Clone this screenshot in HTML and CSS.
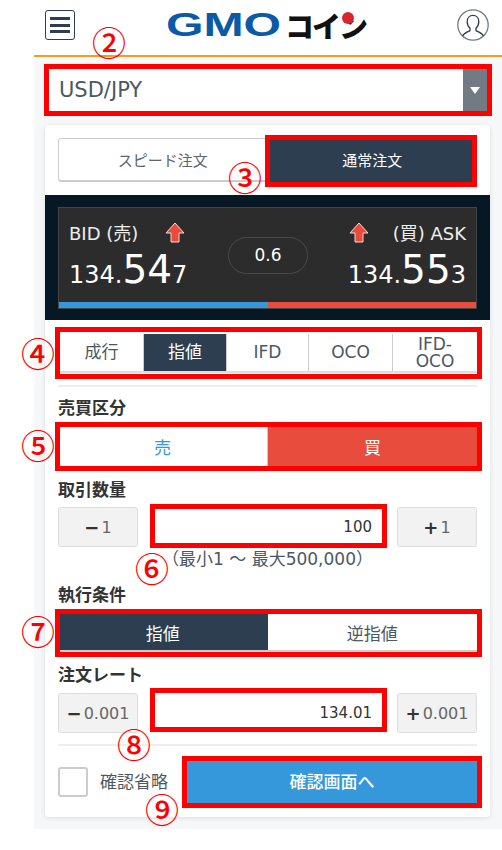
FILE: index.html
```html
<!DOCTYPE html>
<html lang="ja">
<head>
    <meta charset="UTF-8">
    <meta name="viewport" content="width=device-width, initial-scale=1.0">
    <title>GMOコイン 注文画面</title>
    <link rel="stylesheet" href="styles.css">
</head>
<body>
    <div class="app">
        <header class="app-header">
            <div class="menu-button"><span></span><span></span><span></span></div>
            <div class="logo">
                <span class="logo-gmo">GMO</span>
                <span class="logo-coin">コイン</span>
                <span class="logo-dot"></span>
            </div>
            <svg class="user-icon" viewBox="0 0 32 32" width="32" height="32">
                <circle cx="16" cy="16" r="15.2" fill="#fff" stroke="#6f7c86" stroke-width="1.3"/>
                <path d="M5.5 27 C7 23.5 10.5 23 13 21.6 V19.2 C11 17.5 10.2 15 10.2 12.6 C10.2 8.8 12.6 6.4 16 6.4 C19.4 6.4 21.8 8.8 21.8 12.6 C21.8 15 21 17.5 19 19.2 V21.6 C21.5 23 25 23.5 26.5 27" fill="none" stroke="#2c3e50" stroke-width="1.3"/>
            </svg>
        </header>

        <main class="content">
            <div class="symbol-select">
                <span class="symbol-name">USD/JPY</span>
                <span class="select-caret"></span>
            </div>

            <section class="order-card">
                <div class="mode-tabs">
                    <div class="mode-tab">スピード注文</div>
                    <div class="mode-tab active">通常注文</div>
                </div>

                <div class="rate-board">
                    <div class="rate-panel">
                        <div class="rate-main">
                            <div class="rate-side">
                                <div class="rate-head">
                                    <span class="rate-label">BID (売)</span>
                                    <svg class="up-arrow" viewBox="0 0 20 21" width="20" height="21"><path d="M10 1 L19 11 H14 V20 H6 V11 H1 Z" fill="#e74c3c" stroke="#f5d9d5" stroke-width="1"/></svg>
                                </div>
                                <div class="rate-price">134.<span class="big">54</span>7</div>
                            </div>
                            <div class="spread">0.6</div>
                            <div class="rate-side right">
                                <div class="rate-head">
                                    <svg class="up-arrow" viewBox="0 0 20 21" width="20" height="21"><path d="M10 1 L19 11 H14 V20 H6 V11 H1 Z" fill="#e74c3c" stroke="#f5d9d5" stroke-width="1"/></svg>
                                    <span class="rate-label">(買) ASK</span>
                                </div>
                                <div class="rate-price">134.<span class="big">55</span>3</div>
                            </div>
                        </div>
                        <div class="rate-bar"><span class="bar-bid"></span><span class="bar-ask"></span></div>
                    </div>
                </div>

                <div class="type-tabs">
                    <div class="type-tab">成行</div>
                    <div class="type-tab active">指値</div>
                    <div class="type-tab">IFD</div>
                    <div class="type-tab">OCO</div>
                    <div class="type-tab">IFD-<br>OCO</div>
                </div>

                <div class="divider top-divider"></div>

                <div class="field-label first">売買区分</div>
                <div class="toggle side-toggle">
                    <div class="toggle-item sell">売</div>
                    <div class="toggle-item buy">買</div>
                </div>

                <div class="field-label amount-label">取引数量</div>
                <div class="stepper amount-stepper">
                    <div class="step-button"><b>−</b>1</div>
                    <div class="step-input">100</div>
                    <div class="step-button"><b>+</b>1</div>
                </div>
                <div class="hint">（最小1 ～ 最大500,000）</div>

                <div class="field-label exec-label">執行条件</div>
                <div class="toggle exec-toggle">
                    <div class="toggle-item dark">指値</div>
                    <div class="toggle-item">逆指値</div>
                </div>

                <div class="field-label rate-input-label">注文レート</div>
                <div class="stepper rate-stepper">
                    <div class="step-button"><b>−</b>0.001</div>
                    <div class="step-input">134.01</div>
                    <div class="step-button"><b>+</b>0.001</div>
                </div>

                <div class="divider bottom-divider"></div>

                <div class="confirm-row">
                    <span class="check-box"></span>
                    <span class="check-label">確認省略</span>
                    <div class="confirm-button">確認画面へ</div>
                </div>
            </section>
        </main>
    </div>

    <!-- 説明用の赤枠と番号 -->
    <div class="mark box-2"></div>
    <div class="mark box-3"></div>
    <div class="mark box-4"></div>
    <div class="mark box-5"></div>
    <div class="mark box-6"></div>
    <div class="mark box-7"></div>
    <div class="mark box-8"></div>
    <div class="mark box-9"></div>
    <span class="num num-2">②</span>
    <span class="num num-3">③</span>
    <span class="num num-4">④</span>
    <span class="num num-5">⑤</span>
    <span class="num num-6">⑥</span>
    <span class="num num-7">⑦</span>
    <span class="num num-8">⑧</span>
    <span class="num num-9">⑨</span>
</body>
</html>
```

FILE: styles.css
```css
* {
    box-sizing: border-box;
}
html, body {
    height: 850px;
    overflow: hidden;
}
body {
    position: relative;
    margin: 0;
    background-color: #fff;
    color: #333;
    font-family: "DejaVu Sans", "Noto Sans CJK JP", sans-serif;
}
.app {
    margin-left: 34px;
    width: 468px;
}
.app-header {
    height: 57px;
    padding: 10px 13px 0 11px;
    border-bottom: 2px solid #f39c1f;
    background-color: #fff;
    display: flex;
    justify-content: space-between;
    align-items: flex-start;
    position: relative;
}
.menu-button {
    width: 30px;
    height: 30px;
    border: 1.5px solid #2c3e50;
    border-radius: 3px;
    padding: 6px 4px;
    display: flex;
    flex-direction: column;
    justify-content: space-between;
}
.menu-button span {
    display: block;
    height: 3px;
    background-color: #2c3e50;
}
.logo {
    position: relative;
    width: 200px;
    height: 28px;
    margin-top: 1px;
    display: flex;
    align-items: center;
    white-space: nowrap;
}
.logo-gmo {
    width: 117px;
    color: #0a5aa8;
    font-family: "Liberation Sans", sans-serif;
    font-weight: 700;
    font-size: 33px;
    line-height: 28px;
    transform: scaleX(1.46);
    transform-origin: left center;
}
.logo-coin {
    margin-left: 3px;
    color: #111;
    font-family: "Noto Sans CJK JP", sans-serif;
    font-weight: 900;
    font-size: 29px;
    line-height: 28px;
    letter-spacing: -2px;
}
.logo-dot {
    position: absolute;
    left: 176px;
    top: 1px;
    width: 12px;
    height: 12px;
    border-radius: 50%;
    background-color: #d9262c;
}
.user-icon {
    margin-top: -1px;
}
.content {
    height: 772px;
    padding: 12px 12px 0 11px;
    background-color: #f6f7f9;
}
.symbol-select {
    margin: 0 -7px 0 4px;
    width: 438px;
    height: 42px;
    background-color: #fff;
    display: flex;
    justify-content: space-between;
    align-items: stretch;
}
.symbol-name {
    padding-left: 10px;
    font-size: 21px;
    line-height: 42px;
    color: #4b5863;
}
.select-caret {
    position: relative;
    width: 24px;
    background-color: #727b84;
}
.select-caret::after {
    content: "";
    position: absolute;
    left: 7px;
    top: 18px;
    border-left: 5px solid transparent;
    border-right: 5px solid transparent;
    border-top: 7px solid #fff;
}
.order-card {
    margin-top: 14px;
    width: 445px;
    height: 692px;
    padding-top: 13px;
    background-color: #fff;
    border-radius: 4px;
    box-shadow: 0 1px 5px rgba(0, 0, 0, 0.1);
}
.mode-tabs {
    display: flex;
    height: 44px;
    margin: 0 13px;
}
.mode-tab {
    flex: 1;
    display: flex;
    align-items: center;
    justify-content: center;
    border: 1px solid #ccc;
    border-bottom-width: 2px;
    border-radius: 3px 0 0 3px;
    color: #5a6670;
    font-size: 15px;
}
.mode-tab.active {
    background-color: #2c3e50;
    border-color: #2c3e50;
    border-radius: 0 3px 3px 0;
    color: #fff;
}
.rate-board {
    margin-top: 13px;
    height: 125px;
    padding: 12px 13px 11px;
    background-color: #051824;
}
.rate-panel {
    height: 102px;
    background-color: #2c2c2c;
    border: 1px solid #454545;
    display: flex;
    flex-direction: column;
    color: #fff;
}
.rate-main {
    flex: 1;
    padding: 14px 10px 0 10px;
    display: flex;
    justify-content: space-between;
    position: relative;
}
.rate-side.right {
    text-align: right;
}
.rate-head {
    display: flex;
    align-items: center;
    gap: 27px;
    height: 20px;
}
.rate-side.right .rate-head {
    gap: 24px;
    justify-content: flex-end;
}
.rate-label {
    font-size: 18px;
    color: #eee;
    white-space: nowrap;
}
.rate-price {
    margin-top: 8px;
    font-size: 24px;
    line-height: 40px;
    white-space: nowrap;
}
.rate-price .big {
    font-size: 39px;
}
.spread {
    position: absolute;
    left: 169px;
    top: 29px;
    width: 80px;
    height: 37px;
    border: 1px solid #4a4a4a;
    border-radius: 19px;
    text-align: center;
    font-size: 17px;
    line-height: 35px;
}
.rate-bar {
    display: flex;
    height: 6px;
}
.rate-bar span {
    flex: 1;
}
.bar-bid {
    background-color: #3498db;
}
.bar-ask {
    background-color: #e74c3c;
}
.type-tabs {
    display: grid;
    grid-template-columns: 83px 83px 82px 84px 85px;
    margin: 14px 13px 0 15px;
    height: 39px;
    border-bottom: 2px solid #ddd;
}
.type-tab {
    display: flex;
    align-items: center;
    justify-content: center;
    text-align: center;
    border-left: 1px solid #ccc;
    color: #4b5863;
    font-size: 17px;
    line-height: 17px;
}
.type-tab:first-child {
    border-left: none;
}
.type-tab.active {
    background-color: #2c3e50;
    color: #fff;
}
.divider {
    height: 2px;
    margin: 0 13px;
    background-color: #eee;
}
.top-divider {
    margin-top: 12px;
}
.field-label {
    margin-left: 13px;
    font-size: 17px;
    font-weight: 700;
    line-height: 20px;
    color: #333;
}
.field-label.first {
    margin-top: 11px;
}
.toggle {
    display: flex;
    margin: 0 13px;
}
.toggle-item {
    flex: 1;
    display: flex;
    align-items: center;
    justify-content: center;
    font-size: 17px;
    color: #4b5863;
}
.side-toggle {
    margin-top: 9px;
    height: 39px;
}
.toggle-item.sell {
    color: #3498db;
    border-right: 1px solid #ccc;
}
.toggle-item.buy {
    background-color: #e74c3c;
    color: #fff;
}
.toggle-item.dark {
    background-color: #2c3e50;
    color: #fff;
}
.amount-label {
    margin-top: 14px;
}
.stepper {
    display: flex;
    justify-content: space-between;
    margin: 0 13px;
    height: 40px;
}
.amount-stepper {
    margin-top: 7px;
}
.rate-stepper {
    margin-top: 8px;
}
.step-button {
    width: 80px;
    background-color: #f2f2f2;
    border: 1px solid #ddd;
    border-radius: 3px;
    display: flex;
    align-items: center;
    justify-content: center;
    font-size: 16px;
    color: #666;
}
.step-button b {
    margin-right: 2px;
    font-size: 18px;
    color: #333;
}
.step-input {
    width: 227px;
    padding-right: 9px;
    text-align: right;
    font-size: 15px;
    line-height: 40px;
    color: #333;
}
.hint {
    margin-top: 2px;
    text-align: center;
    font-size: 17px;
    line-height: 20px;
    color: #4b5863;
}
.exec-label {
    margin-top: 16px;
}
.exec-toggle {
    margin-top: 9px;
    height: 38px;
    border-bottom: 2px solid #ccc;
}
.rate-input-label {
    margin-top: 13px;
}
.bottom-divider {
    margin-top: 11px;
}
.confirm-row {
    display: flex;
    align-items: center;
    margin: 15px 13px 0;
    height: 42px;
}
.check-box {
    width: 30px;
    height: 30px;
    border: 2px solid #ccc;
    border-radius: 3px;
}
.check-label {
    margin-left: 12px;
    font-size: 17px;
    line-height: 20px;
    height: 20px;
    overflow: hidden;
    color: #4b5863;
    white-space: nowrap;
}
.confirm-button {
    margin-left: auto;
    width: 290px;
    height: 42px;
    background-color: #3498db;
    color: #fff;
    font-size: 17px;
    font-weight: 500;
    text-align: center;
    line-height: 42px;
}

/* annotation */
.mark {
    position: absolute;
    border: 5px solid #f00;
}
.box-2 { left: 44px; top: 64px; width: 448px; height: 52px; }
.box-3 { left: 265px; top: 135px; width: 212px; height: 52px; }
.box-4 { left: 55px; top: 327px; width: 427px; height: 52px; }
.box-5 { left: 55px; top: 422px; width: 427px; height: 49px; }
.box-6 { left: 150px; top: 504px; width: 237px; height: 44px; }
.box-7 { left: 55px; top: 609px; width: 427px; height: 48px; }
.box-8 { left: 150px; top: 688px; width: 237px; height: 44px; }
.box-9 { left: 182px; top: 756px; width: 300px; height: 52px; }
.num {
    position: absolute;
    width: 32px;
    height: 32px;
    color: #f00;
    font-family: "Noto Sans CJK JP", sans-serif;
    font-weight: 500;
    font-size: 34px;
    line-height: 32px;
    display: flex;
    justify-content: center;
}
.num-2 { left: 93px; top: 26px; }
.num-3 { left: 229px; top: 161px; }
.num-4 { left: 22px; top: 337px; }
.num-5 { left: 22px; top: 429px; }
.num-6 { left: 136px; top: 552px; }
.num-7 { left: 22px; top: 615px; }
.num-8 { left: 118px; top: 728px; }
.num-9 { left: 146px; top: 793px; }
```
